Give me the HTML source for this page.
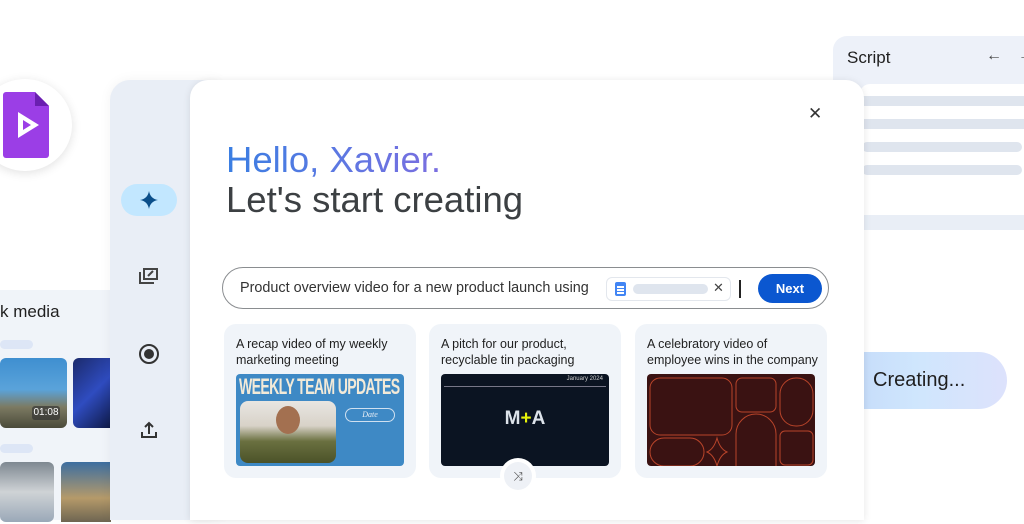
<!DOCTYPE html>
<html><head><style>
*{margin:0;padding:0;box-sizing:border-box}
body{width:1024px;height:512px;overflow:hidden;background:#fff;font-family:"Liberation Sans",Arial,sans-serif;position:relative}
.abs{position:absolute}
.bar{position:absolute;background:#dfe5ee;border-radius:6px;height:10px}
.card{position:absolute;top:324px;width:192px;height:154px;background:#f0f4f9;border-radius:12px}
.card p{position:absolute;left:12px;top:12px;font-size:12.5px;line-height:16px;color:#1f1f1f}
.thumb{position:absolute;left:12px;top:50px;width:168px;height:92px;border-radius:4px;overflow:hidden}
</style></head><body>
<!-- script panel -->
<div class="abs" style="left:833px;top:36px;width:200px;height:480px;background:#edf1f9;border-radius:14px 0 0 0"></div>
<div class="abs" style="left:847px;top:48px;font-size:17px;color:#1f1f1f">Script</div>
<div class="abs" style="left:986px;top:47px;font-size:16px;color:#444">←</div>
<div class="abs" style="left:1018px;top:47px;font-size:16px;color:#444">→</div>
<div class="abs" style="left:860px;top:84px;width:170px;height:440px;background:#fff;border-radius:10px 0 0 0"></div>
<div class="bar" style="left:862px;top:96px;width:170px;border-radius:0"></div>
<div class="bar" style="left:862px;top:119px;width:170px;border-radius:0"></div>
<div class="bar" style="left:862px;top:142px;width:160px"></div>
<div class="bar" style="left:862px;top:165px;width:160px"></div>
<div class="abs" style="left:862px;top:215px;width:170px;height:15px;background:#e9eef6"></div>
<div class="abs" style="left:855px;top:352px;width:152px;height:57px;border-radius:0 29px 29px 0;background:linear-gradient(90deg,#c6dcfa,#cfe6fd 40%,#dde2fc)"></div>
<div class="abs" style="left:873px;top:369px;font-size:20px;color:#1f1f1f">Creating...</div>
<!-- left media -->
<div class="abs" style="left:0;top:290px;width:115px;height:230px;background:#f0f4f9"></div>
<div class="abs" style="left:0;top:302px;font-size:17px;color:#1f1f1f">k media</div>
<div class="abs" style="left:0;top:340px;width:33px;height:9px;background:#dde6f6;border-radius:5px"></div>
<div class="abs" style="left:0;top:358px;width:67px;height:70px;border-radius:6px;background:linear-gradient(180deg,#3f8fd0 0%,#5aa3da 45%,#7c7a62 70%,#4a4a3a)"></div>
<div class="abs" style="left:32px;top:406px;width:28px;height:14px;border-radius:3px;background:#333a;color:#fff;font-size:10px;text-align:center;line-height:14px">01:08</div>
<div class="abs" style="left:73px;top:358px;width:40px;height:70px;border-radius:6px 0 0 6px;background:linear-gradient(135deg,#1b2a6b,#2f4cc0 50%,#0d1740)"></div>
<div class="abs" style="left:0;top:444px;width:33px;height:9px;background:#dde6f6;border-radius:5px"></div>
<div class="abs" style="left:0;top:462px;width:54px;height:60px;border-radius:6px;background:linear-gradient(180deg,#7e8891,#cfd3d6 50%,#9aa8b8)"></div>
<div class="abs" style="left:61px;top:462px;width:50px;height:60px;border-radius:6px 0 0 0;background:linear-gradient(180deg,#3d6ea0,#b59a6a 60%,#6e6552)"></div>
<!-- app icon circle -->
<div class="abs" style="left:-22px;top:79px;width:94px;height:92px;border-radius:50%;background:#fff;box-shadow:0 2px 10px rgba(0,0,0,.12)"></div>
<svg class="abs" style="left:3px;top:92px" width="48" height="66" viewBox="0 0 48 66"><path d="M3 0h29l14 14v49a3 3 0 0 1-3 3H3a3 3 0 0 1-3-3V3a3 3 0 0 1 3-3z" fill="#9b3ee6"/><path d="M32 0l14 14H32z" fill="#6a1fb0"/><path d="M15 20v26l21-13z" fill="#fff"/><path d="M20 28v10l8-5z" fill="#9b3ee6"/></svg>
<!-- sidebar -->
<div class="abs" style="left:110px;top:80px;width:110px;height:440px;background:#e9eef6;border-radius:20px 0 0 0;box-shadow:0 0 12px rgba(0,0,0,.05)"></div>
<div class="abs" style="left:121px;top:184px;width:56px;height:32px;border-radius:16px;background:#c2e7ff"></div>
<svg class="abs" style="left:139px;top:190px" width="20" height="20" viewBox="0 0 20 20"><path d="M10 1C10.8 6 14 9.2 19 10 14 10.8 10.8 14 10 19 9.2 14 6 10.8 1 10 6 9.2 9.2 6 10 1z" fill="#0b4f8a"/></svg>
<svg class="abs" style="left:138px;top:265px" width="22" height="22" viewBox="0 0 22 22" fill="none" stroke="#444" stroke-width="2"><path d="M2 7v11h14"/><path d="M6 4h13v10H6z"/><path d="M10 11l5-5"/></svg>
<svg class="abs" style="left:138px;top:343px" width="22" height="22" viewBox="0 0 22 22"><circle cx="11" cy="11" r="9" fill="none" stroke="#333" stroke-width="2"/><circle cx="11" cy="11" r="5" fill="#333"/></svg>
<svg class="abs" style="left:139px;top:420px" width="20" height="20" viewBox="0 0 20 20" fill="none" stroke="#333" stroke-width="2"><path d="M3 12v5h14v-5M10 14V3M6 7l4-4 4 4"/></svg>
<!-- main card -->
<div class="abs" style="left:190px;top:80px;width:674px;height:440px;background:#fff;border-radius:18px 18px 0 0;box-shadow:0 1px 8px rgba(0,0,0,.1)"></div>
<div class="abs" style="left:808px;top:104px;font-size:17px;color:#333">✕</div>
<div class="abs" style="left:226px;top:139px;font-size:36.5px;line-height:42px;background:linear-gradient(90deg,#3a7ee2,#5b78e2 50%,#7a6ee0);-webkit-background-clip:text;color:transparent">Hello, Xavier.</div>
<div class="abs" style="left:226px;top:179px;font-size:36.5px;line-height:42px;color:#3c4043">Let's start creating</div>
<div class="abs" style="left:222px;top:267px;width:607px;height:42px;border:1px solid #8a8d90;border-radius:21px"></div>
<div class="abs" style="left:240px;top:280px;font-size:14.4px;color:#333">Product overview video for a new product launch using</div>
<div class="abs" style="left:606px;top:277px;width:125px;height:24px;border:1px solid #e3e7ed;border-radius:6px"></div>
<div class="abs" style="left:615px;top:282px;width:11px;height:14px;background:#4285f4;border-radius:2px"></div>
<div class="abs" style="left:617px;top:286px;width:7px;height:1.5px;background:#fff;box-shadow:0 3px 0 #fff,0 6px 0 #fff"></div>
<div class="abs" style="left:633px;top:284px;width:75px;height:10px;background:#dfe5ee;border-radius:5px"></div>
<div class="abs" style="left:713px;top:280px;font-size:13px;color:#444">✕</div>
<div class="abs" style="left:739px;top:280px;width:1.5px;height:18px;background:#222"></div>
<div class="abs" style="left:758px;top:274px;width:64px;height:29px;border-radius:15px;background:#0b57d0;color:#fff;font-size:13px;font-weight:bold;text-align:center;line-height:29px">Next</div>
<div class="card" style="left:224px"><p>A recap video of my weekly<br>marketing meeting</p>
<div class="thumb" style="background:#3e89c5">
<div class="abs" style="left:3px;top:0;font-size:22px;font-weight:bold;color:#f3ead8;letter-spacing:-1px;transform:scaleX(.64);transform-origin:left;white-space:nowrap">WEEKLY TEAM UPDATES</div>
<div class="abs" style="left:4px;top:27px;width:96px;height:62px;border-radius:8px;background:linear-gradient(180deg,#e8e6e2,#d8d2c8 40%,#6a7040 65%,#4b5228)"></div>
<div class="abs" style="left:40px;top:32px;width:24px;height:28px;border-radius:50%;background:#a37050"></div>
<div class="abs" style="left:109px;top:34px;width:50px;height:14px;border:1px solid #cfe0f0;border-radius:7px;color:#e8eef5;font-size:8px;font-style:italic;text-align:center;line-height:12px;font-family:'Liberation Serif',serif">Date</div>
</div></div>
<div class="card" style="left:429px"><p>A pitch for our product,<br>recyclable tin packaging</p>
<div class="thumb" style="background:#0b1422">
<div class="abs" style="right:6px;top:2px;font-size:6px;color:#ccc">January 2024</div>
<div class="abs" style="left:3px;top:12px;width:162px;height:1px;background:#778"></div>
<div class="abs" style="left:0;width:168px;top:34px;text-align:center;font-size:19px;font-weight:bold;color:#dde3ea">M<span style="color:#e5f20a">+</span>A</div>
</div></div>
<div class="card" style="left:635px"><p>A celebratory video of<br>employee wins in the company</p>
<div class="thumb" style="background:#3a1212">
<svg width="168" height="92" viewBox="0 0 168 92" fill="none" stroke="#b8442a" stroke-width="1"><rect x="3" y="4" width="82" height="57" rx="10"/><rect x="89" y="4" width="40" height="34" rx="6"/><rect x="133" y="4" width="33" height="48" rx="16"/><rect x="3" y="64" width="54" height="28" rx="14"/><path d="M70 64q3 11 10 14q-7 3-10 14q-3-11-10-14q7-3 10-14z"/><path d="M89 92V60a20 20 0 0 1 40 0v32"/><rect x="133" y="57" width="33" height="34" rx="5"/></svg>
</div></div>
<div class="abs" style="left:500px;top:458px;width:36px;height:36px;border-radius:50%;background:#fff"></div>
<div class="abs" style="left:504px;top:462px;width:28px;height:28px;border-radius:50%;background:#eef1f6;text-align:center;line-height:28px;font-size:12px;color:#444">⤨</div>
</body></html>
